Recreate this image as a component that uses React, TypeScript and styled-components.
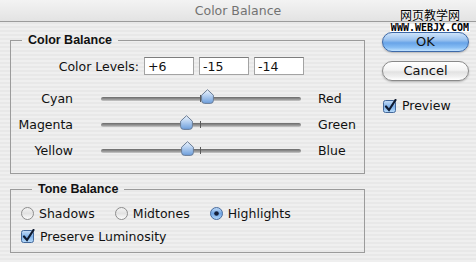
import { FunctionComponent } from 'react';
import styled, { createGlobalStyle } from 'styled-components';

const GlobalStyle = createGlobalStyle`
  html, body {
    margin: 0;
    padding: 0;
  }
  body {
    width: 476px;
    height: 262px;
    overflow: hidden;
    font-family: 'DejaVu Sans', 'Noto Sans', sans-serif;
    font-size: 12.5px;
    color: #111;
  }
`;

const Window = styled.div`
  position: relative;
  width: 476px;
  height: 262px;
  display: flex;
  flex-direction: column;
  background: repeating-linear-gradient(
    to bottom,
    #efefef 0 2px,
    #e8e8e8 2px 4px
  );
`;

const TitleBar = styled.div`
  height: 21px;
  border-bottom: 1px solid #9c9c9c;
  background: linear-gradient(#f3f3f3, #e3e3e3);
  display: flex;
  align-items: center;
  justify-content: center;
  color: #727272;
  font-size: 12.5px;
`;

const Watermark = styled.div`
  position: absolute;
  top: 8px;
  left: 392px;
  width: 76px;
  display: flex;
  flex-direction: column;
  align-items: center;
  gap: 2px;
`;

const WatermarkCjk = styled.span`
  font-family: 'Noto Sans CJK SC', sans-serif;
  font-size: 12px;
  line-height: 14px;
  color: #000;
  text-shadow: 0 0 2px #fff;
`;

const WatermarkUrl = styled.span`
  font-family: 'DejaVu Sans Mono', monospace;
  font-weight: bold;
  font-size: 10px;
  line-height: 8px;
  padding: 0 1px;
  background: #fff;
  color: #000;
`;

const Body = styled.div`
  display: flex;
  gap: 17px;
  padding: 10px 0 0 10px;
`;

const LeftColumn = styled.div`
  width: 355px;
  display: flex;
  flex-direction: column;
  gap: 7px;
`;

const Group = styled.fieldset<{ $padding: string }>`
  margin: 0;
  min-width: 0;
  padding: ${(p) => p.$padding};
  border: 1px solid #9b9b9b;
  display: flex;
  flex-direction: column;
`;

const Legend = styled.legend`
  margin-left: 11px;
  padding: 0 6px;
  font-family: 'Liberation Sans', Arial, sans-serif;
  font-weight: bold;
  font-size: 12.5px;
  line-height: 16px;
  color: #111;
`;

const LevelsRow = styled.div`
  height: 18px;
  display: flex;
  align-items: center;
  gap: 5px;
  margin-bottom: 10px;
`;

const LevelsLabel = styled.span`
  width: 128px;
  text-align: right;
`;

const LevelInput = styled.input`
  box-sizing: border-box;
  width: 50px;
  height: 18px;
  margin: 0;
  padding: 0 3px;
  border: 1px solid #a3a3a3;
  border-top-color: #7d7d7d;
  background: #fff;
  font-family: 'DejaVu Sans', sans-serif;
  font-size: 12.5px;
  color: #111;
  outline: none;
`;

const SliderRow = styled.div`
  height: 26px;
  display: flex;
  align-items: center;
`;

const SliderLabel = styled.span`
  width: 62px;
  text-align: right;
`;

const EndLabel = styled.span`
  margin-left: 17px;
`;

const Track = styled.div`
  position: relative;
  width: 200px;
  height: 4px;
  margin: 1px 0 0 28px;
  border-radius: 2px;
  background: linear-gradient(#6a6a6a, #9a9a9a 60%, #cbcbcb);
`;

const Tick = styled.span`
  position: absolute;
  left: 99px;
  top: -2px;
  width: 1px;
  height: 7px;
  background: #5a5a5a;
`;

const ThumbSvg = styled.svg`
  position: absolute;
  top: -8px;
  width: 13px;
  height: 15px;
`;

const ChoiceRow = styled.div`
  height: 16px;
  display: flex;
  align-items: center;
  gap: 20px;
`;

const Choice = styled.label`
  display: flex;
  align-items: center;
  gap: 5px;
`;

const PreserveRow = styled(ChoiceRow)`
  margin-top: 7px;
`;

const RightColumn = styled.div`
  width: 87px;
  display: flex;
  flex-direction: column;
`;

const PushButton = styled.button<{ $primary?: boolean }>`
  width: 87px;
  height: 20px;
  margin: 0;
  padding: 0;
  border-radius: 10px;
  border: 1px solid ${(p) => (p.$primary ? '#3d69a8' : '#8a8a8a')};
  background: ${(p) =>
    p.$primary
      ? 'linear-gradient(#cfe4fa 0%, #98c1ef 40%, #68a4e8 55%, #86bdf4 80%, #c0e2ff 100%)'
      : 'linear-gradient(#ffffff 0%, #f3f3f3 45%, #e2e2e2 55%, #efefef 80%, #ffffff 100%)'};
  box-shadow: 0 1px 2px rgba(0, 0, 0, 0.25);
  font-family: 'DejaVu Sans', sans-serif;
  font-size: 13px;
  line-height: 18px;
  color: #111;

  & + & {
    margin-top: 9px;
  }
`;

const PreviewRow = styled(Choice)`
  margin: 17px 0 0 1px;
`;

const sliders = [
  { left: 'Cyan', right: 'Red', value: 6 },
  { left: 'Magenta', right: 'Green', value: -15 },
  { left: 'Yellow', right: 'Blue', value: -14 },
];

const Thumb: FunctionComponent<{ value: number }> = ({ value }) => (
  <ThumbSvg viewBox="0 0 13 15" style={{ left: `${value + 100 - 6}px` }}>
    <defs>
      <linearGradient id="thumbFill" x1="0" y1="0" x2="0" y2="1">
        <stop offset="0" stopColor="#eef4fc" />
        <stop offset="0.45" stopColor="#b4cff0" />
        <stop offset="1" stopColor="#6c9ddb" />
      </linearGradient>
    </defs>
    <path
      d="M6.5 0.7 L12.4 6.2 V11.4 Q12.4 14.4 9.4 14.4 H3.6 Q0.6 14.4 0.6 11.4 V6.2 Z"
      fill="url(#thumbFill)"
      stroke="#6b7d96"
      strokeWidth="1"
    />
  </ThumbSvg>
);

const CheckBox: FunctionComponent = () => (
  <svg width="14" height="14" viewBox="0 0 14 14">
    <defs>
      <linearGradient id="boxFill" x1="0" y1="0" x2="0" y2="1">
        <stop offset="0" stopColor="#c9dff7" />
        <stop offset="0.5" stopColor="#7fb1ea" />
        <stop offset="1" stopColor="#b8dcfb" />
      </linearGradient>
    </defs>
    <rect x="0.5" y="1.5" width="12" height="12" rx="2" fill="url(#boxFill)" stroke="#44689a" />
    <path d="M3 7.5 L6 11 L12.5 1" fill="none" stroke="#0f1a30" strokeWidth="2.2" strokeLinecap="round" />
  </svg>
);

const Radio: FunctionComponent<{ checked?: boolean }> = ({ checked }) => (
  <svg width="13" height="13" viewBox="0 0 13 13">
    <defs>
      <linearGradient id="radioOff" x1="0" y1="0" x2="0" y2="1">
        <stop offset="0" stopColor="#f4f4f4" />
        <stop offset="0.5" stopColor="#e2e2e2" />
        <stop offset="1" stopColor="#ffffff" />
      </linearGradient>
      <linearGradient id="radioOn" x1="0" y1="0" x2="0" y2="1">
        <stop offset="0" stopColor="#c4dcf6" />
        <stop offset="0.5" stopColor="#6fa5e4" />
        <stop offset="1" stopColor="#b6dafb" />
      </linearGradient>
    </defs>
    <circle
      cx="6.5"
      cy="6.5"
      r="6"
      fill={checked ? 'url(#radioOn)' : 'url(#radioOff)'}
      stroke={checked ? '#4a6d9e' : '#8c8c8c'}
    />
    {checked && <circle cx="6.5" cy="6.5" r="2.3" fill="#15203a" />}
  </svg>
);

const App: FunctionComponent = () => (
  <Window>
    <GlobalStyle />
    <TitleBar>Color Balance</TitleBar>
    <Watermark>
      <WatermarkCjk>网页教学网</WatermarkCjk>
      <WatermarkUrl>WWW.WEBJX.COM</WatermarkUrl>
    </Watermark>
    <Body>
      <LeftColumn>
        <Group $padding="9px 0 10px 0">
          <Legend>Color Balance</Legend>
          <LevelsRow>
            <LevelsLabel>Color Levels:</LevelsLabel>
            <LevelInput readOnly value="+6" />
            <LevelInput readOnly value="-15" />
            <LevelInput readOnly value="-14" />
          </LevelsRow>
          {sliders.map((s) => (
            <SliderRow key={s.left}>
              <SliderLabel>{s.left}</SliderLabel>
              <Track>
                <Tick />
                <Thumb value={s.value} />
              </Track>
              <EndLabel>{s.right}</EndLabel>
            </SliderRow>
          ))}
        </Group>
        <Group $padding="8px 0 8px 10px">
          <Legend>Tone Balance</Legend>
          <ChoiceRow>
            <Choice>
              <Radio />
              Shadows
            </Choice>
            <Choice>
              <Radio />
              Midtones
            </Choice>
            <Choice>
              <Radio checked />
              Highlights
            </Choice>
          </ChoiceRow>
          <PreserveRow>
            <Choice>
              <CheckBox />
              Preserve Luminosity
            </Choice>
          </PreserveRow>
        </Group>
      </LeftColumn>
      <RightColumn>
        <PushButton $primary>OK</PushButton>
        <PushButton>Cancel</PushButton>
        <PreviewRow>
          <CheckBox />
          Preview
        </PreviewRow>
      </RightColumn>
    </Body>
  </Window>
);

export default App;
